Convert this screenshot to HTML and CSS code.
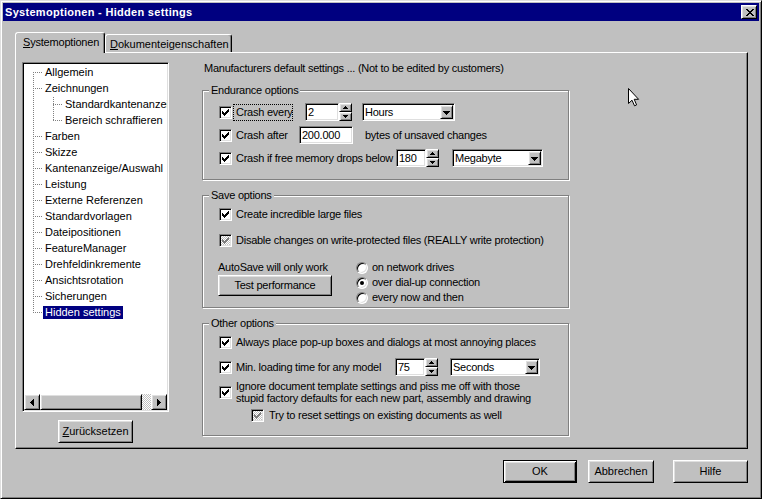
FILE: index.html
```html
<!DOCTYPE html>
<html lang="de">
<head>
<meta charset="utf-8">
<title>Systemoptionen - Hidden settings</title>
<link rel="stylesheet" href="styles.css">
</head>
<body>
<div class="window">
  <div class="titlebar">
    <span class="title">Systemoptionen - Hidden settings</span>
    <div class="close raised"><svg width="8" height="7" viewBox="0 0 8 7"><path d="M0 0h2v1H0zM6 0h2v1H6zM1 1h2v1H1zM5 1h2v1H5zM2 2h4v1H2zM3 3h2v1H3zM2 4h4v1H2zM1 5h2v1H1zM5 5h2v1H5zM0 6h2v1H0zM6 6h2v1H6z"/></svg></div>
  </div>

  <div class="tabs">
    <div class="tab active"><u>S</u>ystemoptionen</div>
    <div class="tab inactive"><u>D</u>okumenteigenschaften</div>
  </div>

  <div class="panel">
    <div class="leftcol">
      <div class="tree">
        <div class="tree-view">
          <div class="branch root">
            <div class="node"><span>Allgemein</span></div>
            <div class="node"><span>Zeichnungen</span></div>
            <div class="branch sub">
              <div class="node"><span>Standardkantenanzeige</span></div>
              <div class="node"><span>Bereich schraffieren</span></div>
            </div>
            <div class="node"><span>Farben</span></div>
            <div class="node"><span>Skizze</span></div>
            <div class="node"><span>Kantenanzeige/Auswahl</span></div>
            <div class="node"><span>Leistung</span></div>
            <div class="node"><span>Externe Referenzen</span></div>
            <div class="node"><span>Standardvorlagen</span></div>
            <div class="node"><span>Dateipositionen</span></div>
            <div class="node"><span>FeatureManager</span></div>
            <div class="node"><span>Drehfeldinkremente</span></div>
            <div class="node"><span>Ansichtsrotation</span></div>
            <div class="node"><span>Sicherungen</span></div>
            <div class="node"><span class="selected">Hidden settings</span></div>
          </div>
        </div>
        <div class="hscroll">
          <div class="sb-btn raised"><svg width="4" height="7" viewBox="0 0 4 7"><path d="M3 0h1v7H3zM2 1h1v5H2zM1 2h1v3H1zM0 3h1v1H0z"/></svg></div>
          <div class="sb-thumb raised"></div>
          <div class="sb-track"></div>
          <div class="sb-btn raised"><svg width="4" height="7" viewBox="0 0 4 7"><path d="M0 0h1v7H0zM1 1h1v5H1zM2 2h1v3H2zM3 3h1v1H3z"/></svg></div>
        </div>
      </div>
      <div class="btn raised reset"><u>Z</u>urücksetzen</div>
    </div>

    <div class="rightcol">
      <div class="intro">Manufacturers default settings ... (Not to be edited by customers)</div>

      <div class="group">
        <div class="gtitle">Endurance options</div>
        <div class="gbody endurance">
          <div class="row">
            <div class="cb"><svg width="7" height="7" viewBox="0 0 7 7"><path d="M0 2h1v3H0zM1 3h1v3H1zM2 4h1v3H2zM3 3h1v3H3zM4 2h1v3H4zM5 1h1v3H5zM6 0h1v3H6z"/></svg></div>
            <div class="focus lbl-every">Crash every</div>
            <div class="edit w-every">2</div>
            <div class="spin">
              <div class="sp raised"><svg width="5" height="3" viewBox="0 0 5 3"><path d="M2 0h1v1H2zM1 1h3v1H1zM0 2h5v1H0z"/></svg></div>
              <div class="sp raised"><svg width="5" height="3" viewBox="0 0 5 3"><path d="M0 0h5v1H0zM1 1h3v1H1zM2 2h1v1H2z"/></svg></div>
            </div>
            <div class="combo c-hours">
              <span class="val">Hours</span>
              <span class="drop raised"><svg width="7" height="4" viewBox="0 0 7 4"><path d="M0 0h7v1H0zM1 1h5v1H1zM2 2h3v1H2zM3 3h1v1H3z"/></svg></span>
            </div>
          </div>
          <div class="row">
            <div class="cb"><svg width="7" height="7" viewBox="0 0 7 7"><path d="M0 2h1v3H0zM1 3h1v3H1zM2 4h1v3H2zM3 3h1v3H3zM4 2h1v3H4zM5 1h1v3H5zM6 0h1v3H6z"/></svg></div>
            <div class="t lbl-after">Crash after</div>
            <div class="edit w-after">200.000</div>
            <div class="t after-text">bytes of unsaved changes</div>
          </div>
          <div class="row">
            <div class="cb"><svg width="7" height="7" viewBox="0 0 7 7"><path d="M0 2h1v3H0zM1 3h1v3H1zM2 4h1v3H2zM3 3h1v3H3zM4 2h1v3H4zM5 1h1v3H5zM6 0h1v3H6z"/></svg></div>
            <div class="t lbl-long">Crash if free memory drops below</div>
            <div class="edit w-num">180</div>
            <div class="spin">
              <div class="sp raised"><svg width="5" height="3" viewBox="0 0 5 3"><path d="M2 0h1v1H2zM1 1h3v1H1zM0 2h5v1H0z"/></svg></div>
              <div class="sp raised"><svg width="5" height="3" viewBox="0 0 5 3"><path d="M0 0h5v1H0zM1 1h3v1H1zM2 2h1v1H2z"/></svg></div>
            </div>
            <div class="combo c-unit">
              <span class="val">Megabyte</span>
              <span class="drop raised"><svg width="7" height="4" viewBox="0 0 7 4"><path d="M0 0h7v1H0zM1 1h5v1H1zM2 2h3v1H2zM3 3h1v1H3z"/></svg></span>
            </div>
          </div>
        </div>
      </div>

      <div class="group">
        <div class="gtitle">Save options</div>
        <div class="gbody save">
          <div class="row">
            <div class="cb"><svg width="7" height="7" viewBox="0 0 7 7"><path d="M0 2h1v3H0zM1 3h1v3H1zM2 4h1v3H2zM3 3h1v3H3zM4 2h1v3H4zM5 1h1v3H5zM6 0h1v3H6z"/></svg></div>
            <div class="t">Create incredible large files</div>
          </div>
          <div class="row gap13">
            <div class="cb disabled"><svg width="7" height="7" viewBox="0 0 7 7"><path d="M0 2h1v3H0zM1 3h1v3H1zM2 4h1v3H2zM3 3h1v3H3zM4 2h1v3H4zM5 1h1v3H5zM6 0h1v3H6z"/></svg></div>
            <div class="t">Disable changes on write-protected files (REALLY write protection)</div>
          </div>
          <div class="autosave">
            <div class="as-left">
              <div class="as-text">AutoSave will only work</div>
              <div class="btn raised test">Test performance</div>
            </div>
            <div class="radios">
              <div class="ropt"><span class="radio"></span><span class="t">on network drives</span></div>
              <div class="ropt"><span class="radio on"></span><span class="t">over dial-up connection</span></div>
              <div class="ropt"><span class="radio"></span><span class="t">every now and then</span></div>
            </div>
          </div>
        </div>
      </div>

      <div class="group">
        <div class="gtitle">Other options</div>
        <div class="gbody other">
          <div class="row">
            <div class="cb"><svg width="7" height="7" viewBox="0 0 7 7"><path d="M0 2h1v3H0zM1 3h1v3H1zM2 4h1v3H2zM3 3h1v3H3zM4 2h1v3H4zM5 1h1v3H5zM6 0h1v3H6z"/></svg></div>
            <div class="t">Always place pop-up boxes and dialogs at most annoying places</div>
          </div>
          <div class="row gap9">
            <div class="cb"><svg width="7" height="7" viewBox="0 0 7 7"><path d="M0 2h1v3H0zM1 3h1v3H1zM2 4h1v3H2zM3 3h1v3H3zM4 2h1v3H4zM5 1h1v3H5zM6 0h1v3H6z"/></svg></div>
            <div class="t lbl-min">Min. loading time for any model</div>
            <div class="edit w-num">75</div>
            <div class="spin">
              <div class="sp raised"><svg width="5" height="3" viewBox="0 0 5 3"><path d="M2 0h1v1H2zM1 1h3v1H1zM0 2h5v1H0z"/></svg></div>
              <div class="sp raised"><svg width="5" height="3" viewBox="0 0 5 3"><path d="M0 0h5v1H0zM1 1h3v1H1zM2 2h1v1H2z"/></svg></div>
            </div>
            <div class="combo c-sec">
              <span class="val">Seconds</span>
              <span class="drop raised"><svg width="7" height="4" viewBox="0 0 7 4"><path d="M0 0h7v1H0zM1 1h5v1H1zM2 2h3v1H2zM3 3h1v1H3z"/></svg></span>
            </div>
          </div>
          <div class="row gap4">
            <div class="cb"><svg width="7" height="7" viewBox="0 0 7 7"><path d="M0 2h1v3H0zM1 3h1v3H1zM2 4h1v3H2zM3 3h1v3H3zM4 2h1v3H4zM5 1h1v3H5zM6 0h1v3H6z"/></svg></div>
            <div class="t two">Ignore document template settings and piss me off with those<br>stupid factory defaults for each new part, assembly and drawing</div>
          </div>
          <div class="row gap5 indent">
            <div class="cb disabled"><svg width="7" height="7" viewBox="0 0 7 7"><path d="M0 2h1v3H0zM1 3h1v3H1zM2 4h1v3H2zM3 3h1v3H3zM4 2h1v3H4zM5 1h1v3H5zM6 0h1v3H6z"/></svg></div>
            <div class="t t5">Try to reset settings on existing documents as well</div>
          </div>
        </div>
      </div>
    </div>
  </div>

  <div class="footer">
    <div class="btn default ok">OK</div>
    <div class="btn raised cancel">Abbrechen</div>
    <div class="btn raised help">Hilfe</div>
  </div>

  <svg class="cursor" width="12" height="19" viewBox="0 0 12 19"><path d="M0.5 0.5V15.5L4 12.2L6.5 17.8L8.6 16.9L6.2 11.3H10.6Z" fill="#fff" stroke="#000" stroke-width="1" stroke-linejoin="miter"/></svg>
</div>
</body>
</html>
```
FILE: styles.css
```css
* { box-sizing: border-box; }
html, body { margin: 0; padding: 0; }
body {
  width: 762px;
  height: 499px;
  overflow: hidden;
  background: #c0c0c0;
  color: #000;
  font-family: "Liberation Sans", Arial, sans-serif;
  font-size: 11px;
  line-height: 13px;
}

.window {
  position: relative;
  width: 762px;
  height: 499px;
  padding: 2px;
  background: #c0c0c0;
  border: 1px solid;
  border-color: #dfdfdf #000 #000 #dfdfdf;
  box-shadow: inset 1px 1px #fff, inset -1px -1px #808080;
  overflow: hidden;
}

.raised {
  background: #c0c0c0;
  border: 1px solid;
  border-color: #fff #000 #000 #fff;
  box-shadow: inset 1px 1px #dfdfdf, inset -1px -1px #808080;
}

/* title bar */
.titlebar {
  height: 18px;
  background: #000080;
  color: #fff;
  font-weight: bold;
  display: flex;
  align-items: center;
  justify-content: space-between;
  padding: 0 2px 0 2px;
}
.title { letter-spacing: 0.3px; }
.close {
  width: 16px;
  height: 14px;
  display: flex;
  align-items: center;
  justify-content: center;
  padding-left: 1px;
}

/* tabs */
.tabs {
  position: relative;
  z-index: 1;
  display: flex;
  align-items: flex-end;
  height: 20px;
  margin: 11px 0 0 12px;
}
.tab {
  height: 18px;
  padding: 3px 0 0 4px;
  line-height: 13px;
  background: #c0c0c0;
  border: 1px solid;
  border-bottom: 0;
  border-color: #fff #000 transparent #fff;
  border-radius: 3px 3px 0 0;
  box-shadow: inset -1px 0 #808080;
  white-space: nowrap;
}
.tab.active {
  width: 90px;
  height: 21px;
  margin-bottom: -1px;
  padding-left: 7px;
  letter-spacing: -0.2px;
}
.tab.inactive { width: 127px; }

/* panel */
.panel {
  display: flex;
  width: 733px;
  height: 397px;
  margin-left: 12px;
  padding: 9px 0 0 6px;
  border: 1px solid;
  border-color: #fff #000 #000 #fff;
  box-shadow: inset -1px -1px #808080;
}

.leftcol {
  width: 147px;
  flex: none;
  display: flex;
  flex-direction: column;
}
.tree {
  height: 350px;
  display: flex;
  flex-direction: column;
  padding: 1px;
  background: #fff;
  border: 1px solid;
  border-color: #808080 #fff #fff #808080;
  box-shadow: inset 1px 1px #000, inset -1px -1px #dfdfdf;
}
.tree-view {
  flex: 1;
  overflow: hidden;
  white-space: nowrap;
  background: #fff;
}
.branch.root {
  margin-left: 9px;
  background: repeating-linear-gradient(to bottom, #808080 0 1px, transparent 1px 2px) 0 8px / 1px calc(100% - 16px) no-repeat;
}
.branch.sub {
  margin-left: 20px;
  background: repeating-linear-gradient(to bottom, #808080 0 1px, transparent 1px 2px) 0 1px / 1px calc(100% - 9px) no-repeat;
}
.node {
  height: 16px;
  line-height: 16px;
  padding-left: 12px;
  background: repeating-linear-gradient(to right, #808080 0 1px, transparent 1px 2px) 0 8px / 10px 1px no-repeat;
}
.node span {
  display: inline-block;
  line-height: 13px;
  padding: 0 2px;
  margin-left: -2px;
}
.node span.selected {
  background: #000080;
  color: #fff;
}

.hscroll {
  flex: none;
  display: flex;
  height: 16px;
}
.sb-btn {
  width: 16px;
  height: 16px;
  flex: none;
  display: flex;
  align-items: center;
  justify-content: center;
}
.sb-thumb { width: 102px; height: 16px; flex: none; }
.sb-track {
  flex: 1;
  background: repeating-conic-gradient(#fff 0 25%, #c0c0c0 0 50%) 0 0 / 2px 2px;
}

.btn {
  display: flex;
  align-items: center;
  justify-content: center;
  height: 23px;
  white-space: nowrap;
}
.btn.reset {
  width: 75px;
  margin: 8px 0 0 36px;
}

/* right column */
.rightcol {
  width: 367px;
  margin-left: 33px;
  flex: none;
  letter-spacing: -0.25px;
}
.intro {
  padding-left: 2px;
  white-space: nowrap;
}
.group {
  margin-top: 15px;
  border: 1px solid #808080;
  box-shadow: inset 1px 1px #fff, 1px 1px #fff;
}
.gtitle {
  width: max-content;
  margin: -7px 0 0 6px;
  padding: 0 2px;
  background: #c0c0c0;
}
.gbody { padding: 6px 0 12px 16px; }
.gbody.save { padding-bottom: 2px; }
.gbody.other { padding-bottom: 13px; }

.row {
  display: flex;
  align-items: center;
}
.endurance .row { height: 18px; }
.endurance .row + .row { margin-top: 5px; }
.row.gap13 { margin-top: 13px; }
.row.gap9 { margin-top: 9px; height: 18px; }
.row.gap4 { margin-top: 4px; }
.row.gap5 { margin-top: 5px; }
.row.indent { padding-left: 32px; }

.t {
  margin-left: 4px;
  white-space: nowrap;
}
.t.t5 { margin-left: 5px; }
.t.two { line-height: 12px; }

.cb {
  width: 13px;
  height: 13px;
  flex: none;
  display: flex;
  align-items: center;
  justify-content: center;
  background: #fff;
  border: 1px solid;
  border-color: #808080 #fff #fff #808080;
  box-shadow: inset 1px 1px #000, inset -1px -1px #dfdfdf;
}
.cb.disabled {
  background: repeating-conic-gradient(#fff 0 25%, #c0c0c0 0 50%) 0 0 / 2px 2px;
}
.cb.disabled svg { fill: #808080; }

.focus {
  width: 60px;
  height: 17px;
  margin-left: 1px;
  padding-left: 2px;
  line-height: 15px;
  border: 1px dotted #000;
  white-space: nowrap;
}

.edit {
  height: 18px;
  flex: none;
  padding-left: 2px;
  line-height: 16px;
  background: #fff;
  border: 1px solid;
  border-color: #808080 #fff #fff #808080;
  box-shadow: inset 1px 1px #000, inset -1px -1px #dfdfdf;
  white-space: nowrap;
}
.w-every { width: 34px; margin-left: 12px; }
.w-after { width: 54px; }
.w-num { width: 30px; }

.lbl-after { width: 63px; }
.lbl-long { width: 160px; }
.lbl-min { width: 159px; }
.after-text { margin-left: 12px; }

.spin {
  width: 13px;
  height: 18px;
  flex: none;
  display: flex;
  flex-direction: column;
}
.spin .sp {
  height: 9px;
  display: flex;
  align-items: center;
  justify-content: center;
}

.combo {
  height: 18px;
  flex: none;
  display: flex;
  align-items: center;
  padding: 1px;
  background: #fff;
  border: 1px solid;
  border-color: #808080 #fff #fff #808080;
  box-shadow: inset 1px 1px #000, inset -1px -1px #dfdfdf;
}
.combo .val { flex: 1; padding-left: 1px; white-space: nowrap; }
.combo .drop {
  width: 13px;
  height: 14px;
  display: flex;
  align-items: center;
  justify-content: center;
  padding-top: 1px;
}
.c-hours { width: 93px; margin-left: 10px; }
.c-unit { width: 91px; margin-left: 13px; }
.c-sec { width: 90px; margin-left: 12px; }

.autosave {
  display: flex;
  margin: 13px 0 0 -1px;
}
.as-left { width: 138px; flex: none; }
.as-text { margin-top: 1px; }
.btn.test {
  width: 114px;
  height: 21px;
  margin-top: 1px;
}
.ropt {
  display: flex;
  align-items: center;
  height: 15px;
}
.radio {
  width: 12px;
  height: 12px;
  flex: none;
  display: flex;
  align-items: center;
  justify-content: center;
  border-radius: 50%;
  background: #fff;
  border: 1px solid;
  border-color: #808080 #fff #fff #808080;
  box-shadow: inset 1px 1px #000, inset -1px -1px #dfdfdf;
}
.radio.on::after {
  content: "";
  width: 4px;
  height: 4px;
  border-radius: 50%;
  background: #000;
}

/* footer */
.footer {
  display: flex;
  justify-content: flex-end;
  margin-top: 11px;
  padding-right: 11px;
}
.btn.default {
  width: 74px;
  background: #c0c0c0;
  border: 1px solid #000;
  box-shadow: inset 1px 1px #fff, inset -1px -1px #000, inset 2px 2px #dfdfdf, inset -2px -2px #808080;
}
.btn.cancel { width: 66px; margin-left: 11px; }
.btn.help { width: 75px; margin-left: 19px; }

.cursor {
  position: absolute;
  left: 627px;
  top: 87px;
}
```
